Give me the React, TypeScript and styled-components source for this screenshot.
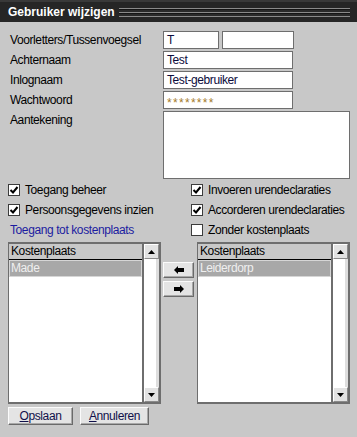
import React from 'react'
import styled, { createGlobalStyle } from 'styled-components'

const GlobalStyle = createGlobalStyle`
    html, body {
        margin: 0;
        padding: 0;
        background: #c8c8c8;
    }
    * {
        box-sizing: border-box;
    }
`

const font = `"Liberation Sans", Arial, sans-serif`

const Window = styled.div`
    width: 357px;
    height: 437px;
    background: #c8c8c8;
    display: flex;
    flex-direction: column;
    font-family: ${font};
    font-size: 12px;
    letter-spacing: -0.4px;
    color: #000;
    overflow: hidden;
`

const TitleBar = styled.div`
    height: 22px;
    background: #262626;
    border-top: 2px solid #393939;
    display: flex;
    align-items: center;
    padding: 0 7px 0 8px;

    .title {
        color: #fff;
        font-weight: bold;
        font-size: 12px;
        letter-spacing: 0;
    }
    .stripes {
        flex: 1;
        margin-left: 4px;
        height: 9px;
        background: repeating-linear-gradient(
            to bottom,
            #8a8a8a 0 1px,
            #151515 1px 2px,
            #2a2a2a 2px 4px
        );
    }
`

const Form = styled.div`
    padding: 9px 8px 0 10px;
    display: flex;
    flex-direction: column;
    gap: 2px;
`

const FieldRow = styled.div<{ tall?: boolean }>`
    display: grid;
    grid-template-columns: 153px auto;
    height: ${(p) => (p.tall ? '68px' : '18px')};

    .label {
        line-height: 18px;
    }
    .inputs {
        display: flex;
        gap: 3px;
    }
`

const Input = styled.div<{ w: number; secret?: boolean }>`
    width: ${(p) => p.w}px;
    height: 18px;
    background: #fff;
    border: 1px solid #6e6e6e;
    padding: ${(p) => (p.secret ? '3px 3px 0' : '0 3px')};
    line-height: 16px;
    color: ${(p) => (p.secret ? '#a57b2c' : '#0c0c3c')};
    letter-spacing: ${(p) => (p.secret ? '1.3px' : '-0.4px')};
`

const TextArea = styled.div`
    width: 187px;
    height: 68px;
    background: #fff;
    border: 1px solid #6e6e6e;
`

const Checks = styled.div`
    margin-top: 1px;
    padding-left: 8px;
    display: grid;
    grid-template-columns: 183px auto;
    grid-auto-rows: 20px;
`

const CheckItem = styled.div<{ blue?: boolean }>`
    display: flex;
    align-items: center;
    gap: 5px;
    color: ${(p) => (p.blue ? '#1c1ca0' : '#000')};
    padding-left: ${(p) => (p.blue ? '2px' : '0')};
`

const Box = styled.span`
    width: 12px;
    height: 12px;
    background: #fff;
    border: 1px solid #3c3c3c;
    display: inline-flex;
    align-items: center;
    justify-content: center;
`

const Lists = styled.div`
    margin-top: 2px;
    padding-left: 8px;
    display: flex;
    height: 162px;
`

const ListFrame = styled.div`
    width: 153px;
    height: 162px;
    border: 2px solid #6e6e6e;
    border-left-width: 1px;
    display: flex;
    background: #fff;
`

const ListBody = styled.div`
    flex: 1;
    display: flex;
    flex-direction: column;

    .head {
        height: 16px;
        line-height: 15px;
        background: #c8c8c8;
        border-bottom: 1px solid #000;
        padding-left: 2px;
    }
    .item {
        height: 17px;
        line-height: 15px;
        background: #a8a8a8;
        border: 1px solid #d6d6d6;
        color: #efefef;
        padding-left: 1px;
    }
`

const Scroll = styled.div`
    width: 17px;
    border-left: 2px solid #6e6e6e;
    display: flex;
    flex-direction: column;
    background: #fff;

    .track {
        flex: 1;
        border-right: 3px solid #dedede;
    }
`

const ScrollBtn = styled.div`
    height: 15px;
    background: #e2e2e2;
    border: 1px solid;
    border-color: #fff #8a8a8a #8a8a8a #fff;
    display: flex;
    align-items: center;
    justify-content: center;
`

const Middle = styled.div`
    width: 36px;
    padding: 20px 0 0 2px;
    display: flex;
    flex-direction: column;
    gap: 3px;
`

const Button = styled.div<{ w: number; h: number }>`
    width: ${(p) => p.w}px;
    height: ${(p) => p.h}px;
    background: #e4e4e4;
    border: 1px solid;
    border-color: #fbfbfb #6a6a6a #6a6a6a #fbfbfb;
    box-shadow: inset -1px -1px 0 #a8a8a8;
    display: flex;
    align-items: center;
    justify-content: center;
    color: #10104a;

    u {
        text-decoration: underline;
    }
`

const Footer = styled.div`
    margin-top: 3px;
    padding-left: 8px;
    display: flex;
    gap: 7px;
`

const Check = () => (
    <svg width="10" height="10" viewBox="0 0 10 10">
        <path d="M1.5 5 L4 7.5 L8.5 2" stroke="#000" strokeWidth="2" fill="none" />
    </svg>
)

const Tri = ({ down }: { down?: boolean }) => (
    <svg width="7" height="4" viewBox="0 0 7 4">
        <polygon points={down ? '0,0 7,0 3.5,4' : '3.5,0 7,4 0,4'} fill="#000" />
    </svg>
)

const Arrow = ({ left }: { left?: boolean }) => (
    <svg width="10" height="8" viewBox="0 0 10 8">
        <polygon
            points={left ? '0,4 4,0 4,2 10,2 10,6 4,6 4,8' : '10,4 6,0 6,2 0,2 0,6 6,6 6,8'}
            fill="#000"
        />
    </svg>
)

function CostList({ selected }: { selected: string }) {
    return (
        <ListFrame>
            <ListBody>
                <div className="head">Kostenplaats</div>
                <div className="item">{selected}</div>
            </ListBody>
            <Scroll>
                <ScrollBtn>
                    <Tri />
                </ScrollBtn>
                <div className="track" />
                <ScrollBtn>
                    <Tri down />
                </ScrollBtn>
            </Scroll>
        </ListFrame>
    )
}

export default function App() {
    return (
        <Window>
            <GlobalStyle />
            <TitleBar>
                <span className="title">Gebruiker wijzigen</span>
                <span className="stripes" />
            </TitleBar>
            <Form>
                <FieldRow>
                    <span className="label">Voorletters/Tussenvoegsel</span>
                    <div className="inputs">
                        <Input w={56}>T</Input>
                        <Input w={72} />
                    </div>
                </FieldRow>
                <FieldRow>
                    <span className="label">Achternaam</span>
                    <Input w={130}>Test</Input>
                </FieldRow>
                <FieldRow>
                    <span className="label">Inlognaam</span>
                    <Input w={130}>Test-gebruiker</Input>
                </FieldRow>
                <FieldRow>
                    <span className="label">Wachtwoord</span>
                    <Input w={130} secret>
                        ********
                    </Input>
                </FieldRow>
                <FieldRow tall>
                    <span className="label">Aantekening</span>
                    <TextArea />
                </FieldRow>
            </Form>
            <Checks>
                <CheckItem>
                    <Box>
                        <Check />
                    </Box>
                    Toegang beheer
                </CheckItem>
                <CheckItem>
                    <Box>
                        <Check />
                    </Box>
                    Invoeren urendeclaraties
                </CheckItem>
                <CheckItem>
                    <Box>
                        <Check />
                    </Box>
                    Persoonsgegevens inzien
                </CheckItem>
                <CheckItem>
                    <Box>
                        <Check />
                    </Box>
                    Accorderen urendeclaraties
                </CheckItem>
                <CheckItem blue>Toegang tot kostenplaats</CheckItem>
                <CheckItem>
                    <Box />
                    Zonder kostenplaats
                </CheckItem>
            </Checks>
            <Lists>
                <CostList selected="Made" />
                <Middle>
                    <Button w={31} h={16}>
                        <Arrow left />
                    </Button>
                    <Button w={31} h={16}>
                        <Arrow />
                    </Button>
                </Middle>
                <CostList selected="Leiderdorp" />
            </Lists>
            <Footer>
                <Button w={65} h={18}>
                    <span>
                        <u>O</u>pslaan
                    </span>
                </Button>
                <Button w={69} h={18}>
                    <span>
                        <u>A</u>nnuleren
                    </span>
                </Button>
            </Footer>
        </Window>
    )
}
